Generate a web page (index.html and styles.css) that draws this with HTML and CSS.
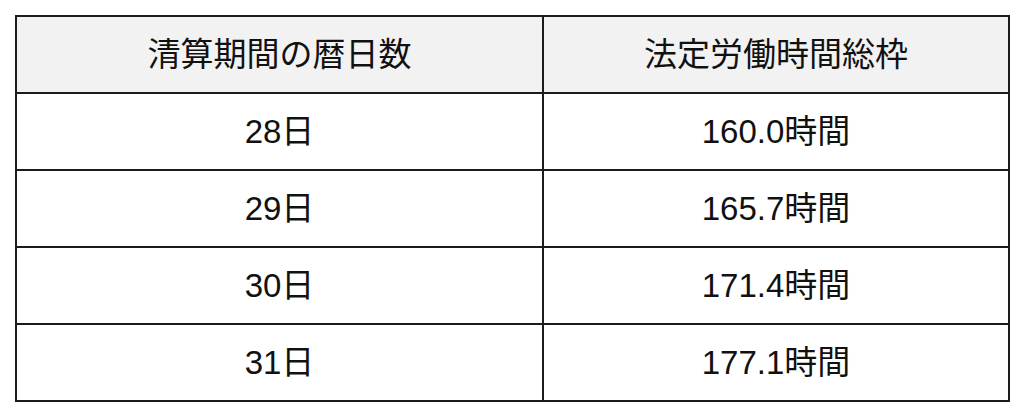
FILE: index.html
```html
<!DOCTYPE html>
<html lang="ja">
<head>
<meta charset="utf-8">
<link rel="stylesheet" href="styles.css">
</head>
<body>
<table class="hours">
  <colgroup><col class="c1"><col class="c2"></colgroup>
  <thead>
    <tr><th>清算期間の暦日数</th><th>法定労働時間総枠</th></tr>
  </thead>
  <tbody>
    <tr><td>28日</td><td>160.0時間</td></tr>
    <tr><td>29日</td><td>165.7時間</td></tr>
    <tr><td>30日</td><td>171.4時間</td></tr>
    <tr><td>31日</td><td>177.1時間</td></tr>
  </tbody>
</table>
</body>
</html>
```
FILE: styles.css
```css
html, body {
  margin: 0;
  padding: 0;
  background: #ffffff;
}
body {
  padding: 15px 0 0 15px;
  font-family: "Liberation Sans", "Noto Sans CJK JP", sans-serif;
  color: #111111;
}
.hours {
  border-collapse: collapse;
  table-layout: fixed;
  width: 993px;
  border: 2px solid #1c1c1c;
}
.c1 { width: 527px; }
.c2 { width: 466px; }
.hours th,
.hours td {
  border: 2px solid #1c1c1c;
  height: 75px;
  padding: 0;
  text-align: center;
  vertical-align: middle;
  font-size: 33px;
  font-weight: 400;
  line-height: 1;
}
.hours th {
  background: #f2f2f2;
}
```
